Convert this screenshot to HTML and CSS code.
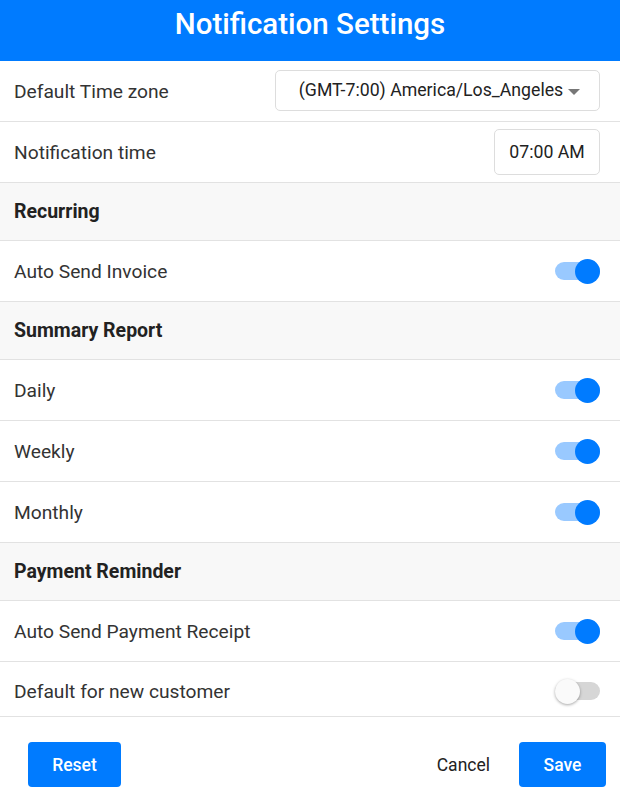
FILE: index.html
```html
<!DOCTYPE html>
<html>
<head>
<meta charset="utf-8">
<link rel="stylesheet" href="styles.css">
</head>
<body>
<div class="page">
  <header class="header">Notification Settings</header>
  <div class="list">
    <div class="row">
      <span class="label">Default Time zone</span>
      <div class="select">(GMT-7:00) America/Los_Angeles<span class="caret"></span></div>
    </div>
    <div class="row">
      <span class="label">Notification time</span>
      <div class="timebox">07:00 AM</div>
    </div>
    <div class="section">Recurring</div>
    <div class="row">
      <span class="label">Auto Send Invoice</span>
      <span class="toggle on"><span class="thumb"></span></span>
    </div>
    <div class="section">Summary Report</div>
    <div class="row">
      <span class="label">Daily</span>
      <span class="toggle on"><span class="thumb"></span></span>
    </div>
    <div class="row">
      <span class="label">Weekly</span>
      <span class="toggle on"><span class="thumb"></span></span>
    </div>
    <div class="row">
      <span class="label">Monthly</span>
      <span class="toggle on"><span class="thumb"></span></span>
    </div>
    <div class="section">Payment Reminder</div>
    <div class="row">
      <span class="label">Auto Send Payment Receipt</span>
      <span class="toggle on"><span class="thumb"></span></span>
    </div>
    <div class="row last">
      <span class="label">Default for new customer</span>
      <span class="toggle off"><span class="thumb"></span></span>
    </div>
  </div>
  <footer class="footer">
    <button class="btn primary">Reset</button>
    <div class="right">
      <button class="btn link">Cancel</button>
      <button class="btn primary save">Save</button>
    </div>
  </footer>
</div>
</body>
</html>
```

FILE: styles.css
```css
* { box-sizing: border-box; }
html, body { margin: 0; padding: 0; background: #fff; }
body { font-family: Roboto, "Open Sans", sans-serif; color: #333; }
.page { width: 620px; }
.header {
  height: 61px;
  background: #007bff;
  color: #fff;
  font-size: 29.5px;
  font-weight: 500;
  display: flex;
  align-items: center;
  justify-content: center;
  padding-bottom: 13px;
}
.list { display: flex; flex-direction: column; }
.row {
  height: 61px;
  display: flex;
  align-items: center;
  justify-content: space-between;
  padding: 0 20px 0 14px;
  border-bottom: 1px solid #e2e2e2;
  font-size: 19.2px;
}
.row.last { height: 55px; padding-top: 4px; }
.section {
  height: 58px;
  display: flex;
  align-items: center;
  padding: 0 14px;
  background: #f8f8f8;
  border-bottom: 1px solid #e2e2e2;
  font-size: 19.5px;
  font-weight: 700;
  color: #222;
}
.label { color: #333; }
.select {
  width: 325px;
  height: 41px;
  border: 1px solid #ddd;
  border-radius: 5px;
  display: flex;
  align-items: center;
  justify-content: center;
  font-size: 17.7px;
  color: #222;
  margin-top: -2px;
  padding-left: 4px;
}
.caret {
  width: 0; height: 0;
  border-left: 6px solid transparent;
  border-right: 6px solid transparent;
  border-top: 6px solid #777;
  margin-left: 5px;
  margin-top: 3px;
}
.timebox {
  width: 106px;
  height: 46px;
  border: 1px solid #ddd;
  border-radius: 5px;
  display: flex;
  align-items: center;
  justify-content: center;
  font-size: 17.7px;
  color: #222;
  margin-top: 0;
}
.toggle {
  position: relative;
  width: 45px;
  height: 18px;
  border-radius: 9px;
}
.toggle.on { background: #99c9ff; }
.toggle.off { background: #d6d6d6; }
.thumb {
  position: absolute;
  top: -3.5px;
  width: 25px;
  height: 25px;
  border-radius: 50%;
}
.toggle.on .thumb { right: 0; background: #007bff; }
.toggle.off .thumb { left: 0; background: #fafafa; box-shadow: 0 1px 3px rgba(0,0,0,0.35); }
.footer {
  display: flex;
  justify-content: space-between;
  align-items: center;
  padding: 25px 14px 0 28px;
}
.right { display: flex; align-items: center; gap: 29px; }
.btn {
  font-family: Roboto, sans-serif;
  font-size: 17.5px;
  border: none;
  border-radius: 4px;
  height: 45px;
  cursor: pointer;
}
.btn.primary { background: #007bff; color: #fff; width: 93px; font-weight: 500; }
.btn.save { width: 87px; }
.btn.link { background: none; color: #222; padding: 0; }
```
